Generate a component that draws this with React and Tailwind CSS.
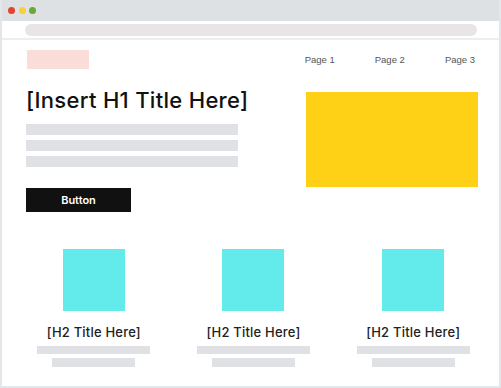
export default function App() {
  const cards = [0, 1, 2];
  return (
    <div className="w-[501px] h-[388px] bg-white">
      <div className="w-[501px] h-[388px] border-2 border-t-0 border-[#e4e7e9] flex flex-col overflow-hidden">
        <div className="h-[21px] bg-[#dde1e4] flex items-center pl-[6px] gap-[3.5px] shrink-0">
          <span className="w-[7px] h-[7px] rounded-full bg-[#e8412f]" />
          <span className="w-[7px] h-[7px] rounded-full bg-[#f9cf3b]" />
          <span className="w-[7px] h-[7px] rounded-full bg-[#6aa838]" />
        </div>
        <div className="h-[17px] flex items-center pl-[23px] shrink-0">
          <div className="w-[452px] h-[12px] rounded-full bg-[#e9e5e6]" />
        </div>
        <div className="h-[2px] bg-[#eceef0] shrink-0" />
        <div className="flex items-center justify-between pl-[25px] pr-[24px] mt-[10px] shrink-0" style={{ fontFamily: '"Liberation Sans", Arial, sans-serif' }}>
          <div className="w-[62px] h-[19px] bg-[#fadcd9]" />
          <div className="flex gap-[40px] text-[9.5px] text-[#555] pt-[1px]">
            <span>Page 1</span>
            <span>Page 2</span>
            <span>Page 3</span>
          </div>
        </div>
        <div className="flex justify-between pl-[24px] pr-[21px] mt-[21px] shrink-0">
          <div className="flex flex-col">
            <h1 className="text-[22px] leading-[24px] font-medium text-[#111] tracking-[0.3px] -mt-[2px]" style={{ fontFamily: 'Inter, "Noto Sans", sans-serif' }}>
              [Insert H1 Title Here]
            </h1>
            <div className="mt-[12px] flex flex-col gap-[5px]">
              <div className="w-[212px] h-[11px] bg-[#dfe1e4]" />
              <div className="w-[212px] h-[11px] bg-[#dfe1e4]" />
              <div className="w-[212px] h-[11px] bg-[#dfe1e4]" />
            </div>
            <button className="mt-[21px] w-[105px] h-[24px] bg-[#111] text-white text-[11px] font-semibold flex items-center justify-center" style={{ fontFamily: 'Inter, "Noto Sans", sans-serif' }}>
              Button
            </button>
          </div>
          <div className="w-[172px] h-[95px] bg-[#fed116] mt-[2px]" />
        </div>
        <div className="grid grid-cols-3 w-[479px] ml-[12px] mt-[37px]">
          {cards.map((i) => (
            <div key={i} className="flex flex-col items-center">
              <div className="w-[62px] h-[62px] bg-[#62ebea]" />
              <h2 className="mt-[13px] text-[13px] leading-[16px] font-medium text-[#222] tracking-[0.2px]" style={{ fontFamily: 'Inter, "Noto Sans", sans-serif' }}>
                [H2 Title Here]
              </h2>
              <div className="mt-[6px] w-[113px] h-[8px] bg-[#dfe1e4]" />
              <div className="mt-[4px] w-[83px] h-[9px] bg-[#dfe1e4]" />
            </div>
          ))}
        </div>
      </div>
    </div>
  );
}
